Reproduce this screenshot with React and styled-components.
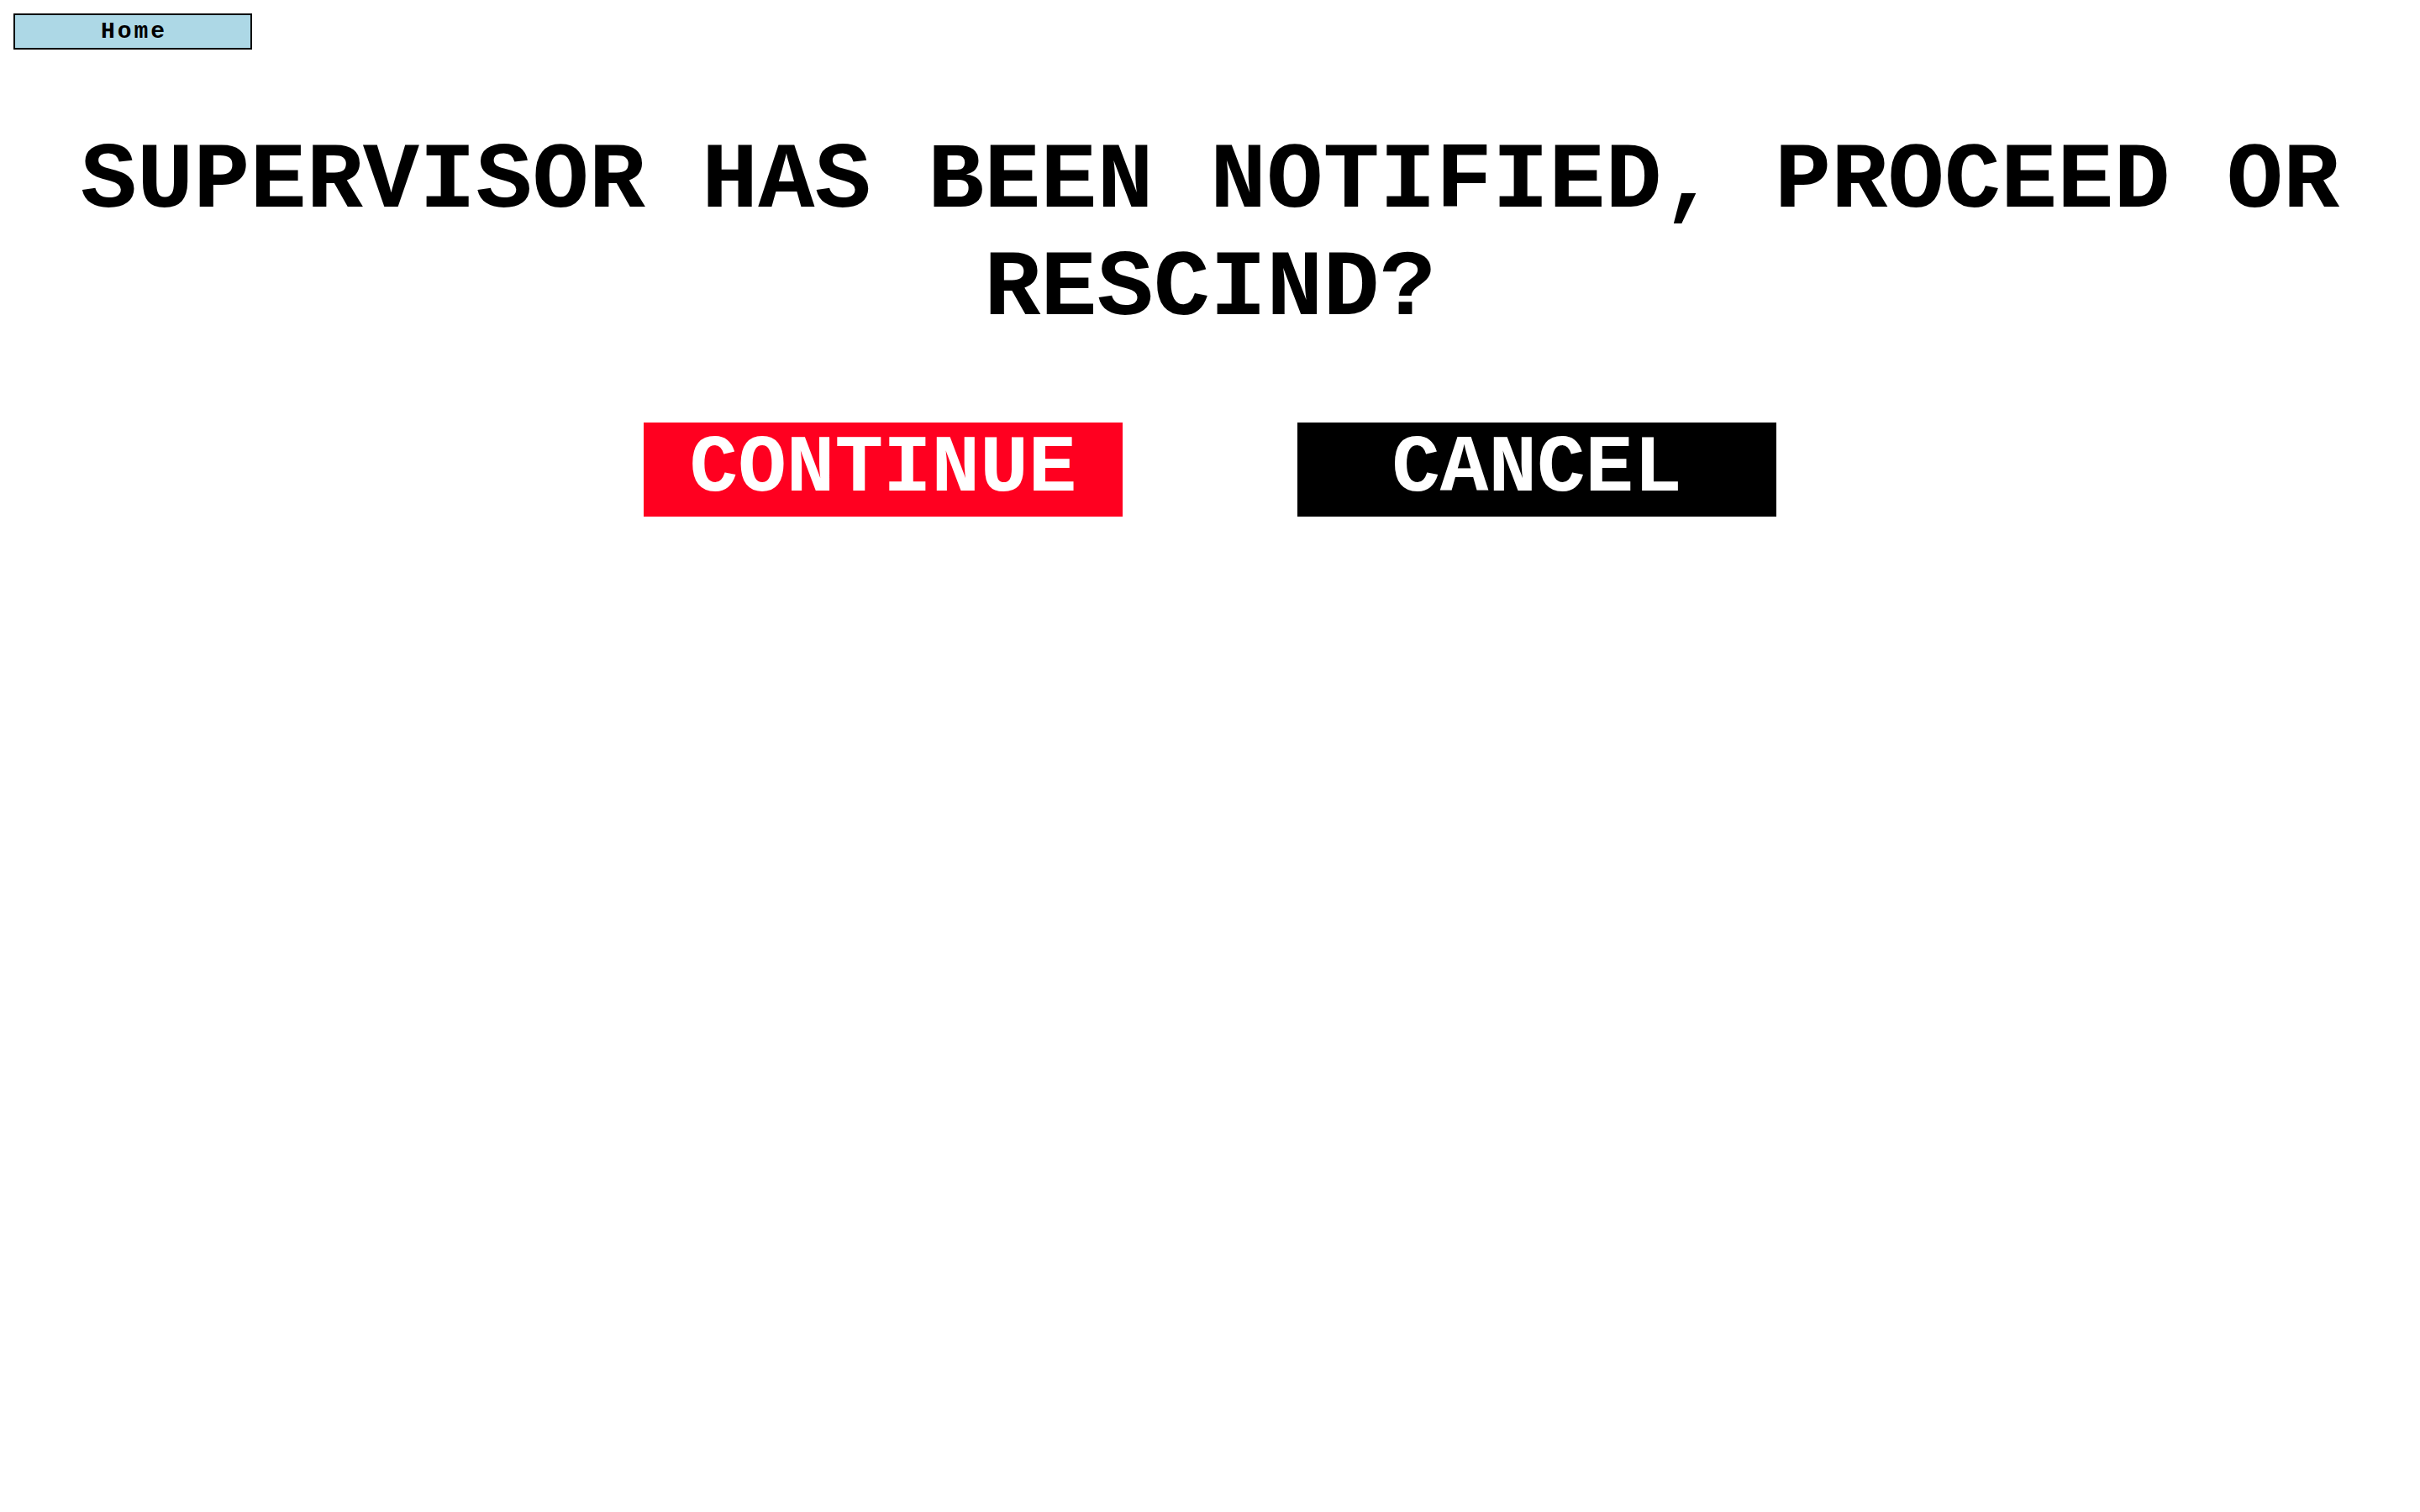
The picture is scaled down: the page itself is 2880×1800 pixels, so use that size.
import styled, { createGlobalStyle } from "styled-components";

const GlobalStyle = createGlobalStyle`
  html, body {
    margin: 0;
    padding: 0;
    background: #fff;
  }
  body {
    font-family: "Courier New", "Liberation Mono", monospace;
    color: #000;
  }
`;

const App = () => {
  return (
    <>
      <GlobalStyle />
      <Page>
        <Nav>
          <HomeButton>Home</HomeButton>
        </Nav>
        <Prompt>SUPERVISOR HAS BEEN NOTIFIED, PROCEED OR RESCIND?</Prompt>
        <Actions>
          <ActionButton $bg="#ff0020">CONTINUE</ActionButton>
          <ActionButton $bg="#000">CANCEL</ActionButton>
        </Actions>
      </Page>
    </>
  );
};

export default App;

/**
 *
 * STYLED COMPONENTS
 *
 **/
const Page = styled.div`
  min-height: 1800px;
  padding: 16px;
  box-sizing: border-box;
`;

const Nav = styled.div`
  display: flex;
`;

const HomeButton = styled.button`
  width: 284px;
  height: 43px;
  padding: 0 0 0 3px;
  margin: 0;
  background-color: lightblue;
  border: 2px solid #000;
  font-family: "Courier New", "Liberation Mono", monospace;
  font-weight: bold;
  font-size: 28px;
  letter-spacing: 3px;
  color: #000;
  cursor: pointer;
`;

const Prompt = styled.h1`
  margin: 94px 0;
  font-family: "Courier New", "Liberation Mono", monospace;
  font-weight: bold;
  font-size: 112px;
  line-height: 128px;
  text-align: center;
`;

const Actions = styled.div`
  display: flex;
  justify-content: center;
  gap: 208px;
`;

const ActionButton = styled.button`
  width: 570px;
  height: 112px;
  padding: 0;
  margin: 0;
  border: none;
  background-color: ${(p) => p.$bg};
  color: #fff;
  font-family: "Courier New", "Liberation Mono", monospace;
  font-weight: bold;
  font-size: 96px;
  line-height: 1;
  display: flex;
  align-items: center;
  justify-content: center;
  cursor: pointer;
`;
